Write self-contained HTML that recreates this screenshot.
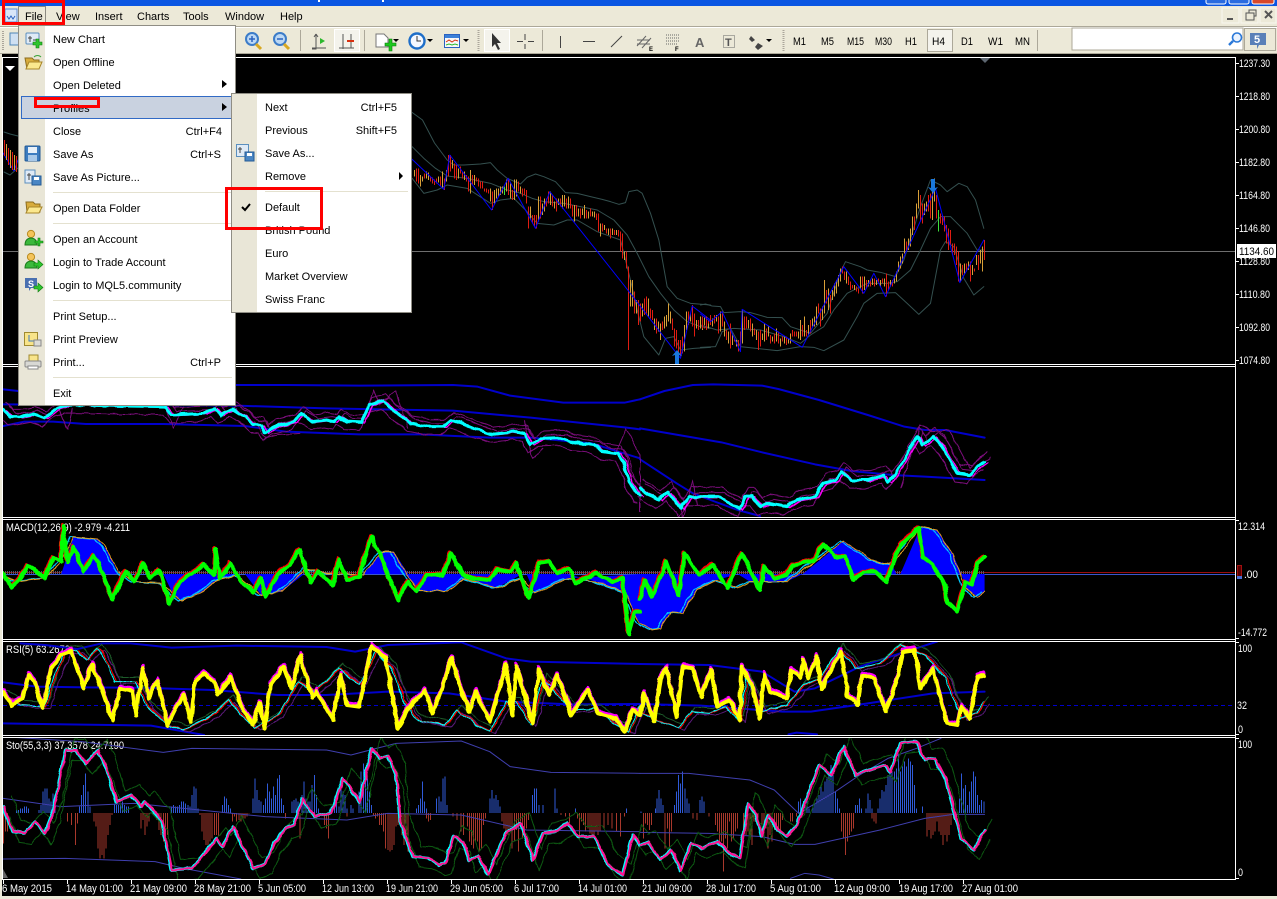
<!DOCTYPE html>
<html><head><meta charset="utf-8"><title>MT4 File Profiles Menu</title>
<style>
html,body{margin:0;padding:0;background:#000;overflow:hidden}
svg{display:block}
svg text{font-family:"Liberation Sans",sans-serif;font-size:11px;fill:#000}
.w text,text.w{fill:#fff}
.ln path,path.ln,defs path{vector-effect:non-scaling-stroke;fill:none;stroke-linejoin:round;stroke-linecap:round}
.bar{vector-effect:non-scaling-stroke;fill:none;shape-rendering:crispEdges;stroke-width:1}
</style></head><body>
<svg xmlns="http://www.w3.org/2000/svg" width="1277" height="899" viewBox="0 0 1277 899">
<defs>
<filter id="rough" filterUnits="userSpaceOnUse" x="0" y="0" width="1277" height="899" color-interpolation-filters="sRGB">
<feTurbulence type="fractalNoise" baseFrequency="0.12" numOctaves="1" seed="7" result="n"/>
<feDisplacementMap in="SourceGraphic" in2="n" scale="4" xChannelSelector="R" yChannelSelector="G"/>
</filter>
<clipPath id="c1"><rect x="3" y="58" width="1232" height="306"/></clipPath>
<clipPath id="c2"><rect x="3" y="367" width="1232" height="150"/></clipPath>
<clipPath id="c3"><rect x="3" y="520" width="1232" height="119"/></clipPath>
<clipPath id="c4"><rect x="3" y="642" width="1232" height="93"/></clipPath>
<clipPath id="c5"><rect x="3" y="738" width="1232" height="141"/></clipPath>

<path id="cy6" d="M8 135 25 155 50 155 80 148 110 160 140 130 170 120 405 125 420 150 500 145 525 130 540 150 570 132 600 155 620 178 640 180 650 205 670 185 720 170 735 148 755 160 765 170 800 165 820 170 830 155 850 170 885 172 905 120 940 108 965 140 985 155 1005 175 1050 185 1085 185 1105 165 1130 175 1160 190 1205 208 1265 200 1285 205 1300 240 1325 220 1375 218 1405 232 1455 240 1475 258 1515 265 1530 300 1540 350 1560 385 1568 390"/>
<path id="cy7" d="M0 370 30 395 45 405 70 380 100 430 120 395 145 395 195 395 220 415 245 430 260 395 275 395 295 425 315 415 360 425 385 405 430 395 450 355 480 345 495 320 520 345 560 345 600 330 610 350 625 330 650 280 680 215 695 240 720 215 740 240 780 325 810 330 830 305 847 290"/>

<path id="gr6" d="M8 625 28 665 50 640 70 600 90 620 110 640 130 578 150 590 155 485 165 590 180 545 205 620 230 570 250 620 275 705 295 650 310 620 330 650 350 595 368 640 390 615 415 715 440 650 470 625 500 600 525 630 528 550 540 640 565 595 590 650 620 680 640 640 650 695 680 630 710 600 735 555 760 650 780 620 815 660 830 585 850 645 880 635 910 515 935 580 975 705 1000 650 1020 680 1045 630 1085 630 1105 565 1135 630 1160 640 1200 645 1220 612 1250 620 1265 595 1295 700 1320 595 1345 590 1365 625 1395 610 1410 655 1460 625 1500 650 1525 640 1540 805 1555 740 1568 740"/>
<path id="gr7" d="M0 700 12 645 30 695 65 590 95 690 110 565 145 630 180 600 215 670 250 565 295 675 305 605 330 640 360 630 375 600 430 585 440 555 450 540 480 575 505 575 525 645 550 620 580 620 605 650 640 540 685 490 695 575 720 600 750 660 755 710 780 740 800 650 815 660 830 595 847 575"/>
<path id="or6" d="M8 630 45 650 110 640 150 590 180 515 240 522 265 560 290 620 330 650 400 655 425 690 445 708 490 685 530 648 580 630 640 690 690 680 750 610 800 625 890 630 935 560 965 560 990 620 1030 678 1095 678 1140 640 1215 670 1280 640 1310 685 1390 640 1460 650 1530 680 1560 760 1568 775"/>
<path id="or7" d="M0 775 30 795 50 790 75 742 105 745 140 675 190 645 240 670 270 650 360 650 430 590 500 528 570 585 620 600 690 485 730 495 770 570 800 670 830 695 847 680"/>

<path id="ye8" d="M8 170 28 210 55 190 70 120 85 140 105 220 125 100 150 60 175 50 205 160 225 90 250 165 275 255 295 160 325 170 333 240 350 100 365 190 385 135 410 270 430 220 450 180 468 260 478 140 500 115 525 140 535 180 565 125 590 210 620 270 635 205 648 280 662 150 695 95 715 160 735 60 765 190 775 170 815 255 835 120 850 210 880 215 910 35 945 70 975 280 1000 220 1040 165 1060 235 1080 170 1105 70 1125 145 1150 230 1165 170 1200 260 1240 90 1255 240 1265 95 1305 265 1320 105 1345 180 1365 120 1400 240 1440 165 1465 235 1510 250 1530 290 1550 225 1568 240"/>
<path id="ye9" d="M0 240 10 175 35 260 50 130 65 100 90 245 105 95 130 100 150 185 175 105 190 215 220 195 245 255 250 95 275 150 295 250 305 120 320 170 360 190 372 105 395 130 400 75 415 130 435 65 445 165 480 80 495 50 510 180 535 210 545 120 575 130 605 230 635 120 645 50 675 45 690 160 720 100 740 195 755 265 780 270 790 215 810 250 830 125 845 120"/>
<path id="rs8" d="M8 180 50 210 110 215 130 130 160 50 190 45 210 75 240 40 265 90 280 140 300 140 330 140 360 215 410 270 450 285 520 240 560 195 590 240 625 280 680 240 730 140 770 170 830 100 880 150 920 50 960 100 985 190 1020 255 1090 270 1120 225 1165 270 1200 290 1240 200 1265 200 1300 270 1330 130 1400 225 1460 220 1510 270 1540 290 1568 210"/>
<path id="rs9" d="M0 230 40 255 95 280 125 230 170 235 210 215 245 258 260 130 300 230 360 210 400 150 440 130 490 40 530 100 590 85 640 30 700 60 750 130 790 250 830 230 845 200"/>

<path id="st8" d="M8 515 30 590 60 595 85 560 110 595 130 530 160 345 185 345 210 385 240 345 260 400 285 500 320 480 345 515 355 500 395 555 420 705 470 700 510 640 530 610 545 635 570 575 620 700 650 685 670 625 700 580 720 570 740 490 770 545 810 535 840 430 880 500 910 340 930 370 950 360 970 420 980 560 1010 665 1050 670 1075 690 1090 685 1110 605 1135 620 1150 680 1170 660 1195 720 1240 590 1275 565 1305 675 1330 595 1360 590 1390 565 1415 605 1455 605 1490 690 1525 720 1550 600 1568 630"/>
<path id="st9" d="M0 630 20 620 50 675 75 645 100 705 125 625 150 640 190 620 225 660 245 670 265 505 285 540 298 605 315 540 340 585 360 605 385 570 440 390 470 420 500 335 530 420 550 410 600 390 615 410 640 325 680 320 700 375 725 370 750 430 790 610 820 645 847 585"/>
</defs>

<!-- base -->
<rect width="1277" height="899" fill="#000"/>
<rect x="0" y="0" width="1277" height="6" fill="#0a56e2"/>
<rect x="0" y="6" width="1277" height="48" fill="#ece9d8"/>
<rect x="0" y="26" width="1277" height="1" fill="#aca899"/>
<rect x="0" y="27" width="1277" height="1" fill="#fff"/>
<rect x="0" y="53" width="1277" height="1" fill="#aca899"/>
<rect x="0" y="54" width="2" height="845" fill="#ece9d8"/>
<rect x="0" y="896" width="1277" height="3" fill="#ece9d8"/>

<!-- title bar remnants -->
<path d="M318 0h2v2h-2zM382 0h2v2h-2z" fill="#fff"/>
<rect x="1206" y="-4" width="20" height="8" rx="2" fill="#2a6be0" stroke="#fff"/>
<rect x="1229" y="-4" width="20" height="8" rx="2" fill="#2a6be0" stroke="#fff"/>
<rect x="1252" y="-4" width="22" height="8" rx="2" fill="#d8482a" stroke="#fff"/>

<!-- frames -->
<g fill="none" stroke="#fff" stroke-width="1" shape-rendering="crispEdges">
<path d="M2.5 57.5H1235.5V879.5H2.5Z"/>
<path d="M2 364.5H1236M2 366.5H1236M2 517.5H1236M2 519.5H1236M2 639.5H1236M2 641.5H1236M2 735.5H1236M2 737.5H1236"/>
<path d="M1236 63.5h3M1236 96.5h3M1236 129.5h3M1236 162.5h3M1236 195.5h3M1236 228.5h3M1236 261.5h3M1236 294.5h3M1236 327.5h3M1236 360.5h3M1236 520.5h3M1236 638.5h3M1236 642.5h3M1236 734.5h3M1236 738.5h3M1236 878.5h3"/>
<path d="M3.5 880v4M67.5 880v4M131.5 880v4M195.5 880v4M259.5 880v4M323.5 880v4M387.5 880v4M451.5 880v4M515.5 880v4M579.5 880v4M643.5 880v4M707.5 880v4M771.5 880v4M835.5 880v4M899.5 880v4M963.5 880v4"/>
</g>

<!-- MAIN CHART -->
<g clip-path="url(#c1)">
<rect x="3" y="251" width="1232" height="1" fill="#6e6e6e"/>
<path d="M5 66h10l-5 5z" fill="#fff"/>
<path d="M980 58h10l-5 5z" fill="#5d6670"/>
<!-- left sliver -->
<g class="ln" stroke-width="1">
<path stroke="#2f4f4f" d="M4 132 10 134 18 136"/>
<path stroke="#2f4f4f" d="M4 172 10 175 18 168"/>
<path stroke="#00f" d="M3 153 14 171 18 160"/>
</g>
<path class="bar" stroke="#e01c12" d="M4.5 140V156M8.5 148V165M12.5 152V170M16.5 156V172"/>
<path class="bar" stroke="#d8a038" d="M6.5 144V160M10.5 150V168M14.5 155V170"/>

<g transform="translate(410.5,140) scale(.33333)">
<g class="ln" stroke="#34504f" stroke-width="1">
<path d="M3 -84 36 -60 72 9 110 60 130 75 160 75 210 72 240 68 260 90 290 115 330 132 350 112 375 102 400 110 435 125 465 158 500 160 540 170 575 178 600 185 625 193 645 188 655 155 680 150 695 160 720 220 745 300 770 440 800 475 840 490 900 495"/>
<path d="M5 20 40 55 75 85 110 108 170 115 240 130 290 150 325 158 365 175 400 185 460 190 500 198 560 210 610 240 650 285 680 340 715 410 750 460 790 510 830 545 870 560 900 565"/>
<path d="M5 115 40 160 80 150 110 135 170 145 240 190 270 180 310 175 345 210 380 250 430 255 470 240 500 240 560 275 630 300 660 420 680 510 700 590 745 645 765 595 790 590 810 630 850 625 900 622"/>
</g>
<path class="bar" stroke="#d8a038" d="M12 90V110M30 105V140M36 110V125M48 95V115M54 98V120M84 110V128M96 95V145M108 90V125M126 60V85M144 85V115M162 95V120M180 90V160M192 105V135M240 145V185M252 150V190M258 145V175M264 145V170M270 140V165M276 140V160M288 118V155M300 130V175M312 118V180M318 118V170M330 140V160M360 200V240M384 170V245M396 190V225M402 175V215M420 155V195M432 185V205M444 175V195M456 165V205M462 165V200M474 170V205M492 195V245M504 205V230M516 205V225M522 195V235M534 215V235M546 215V230M552 215V232M570 250V290M582 255V270M594 265V285M606 265V285M618 270V285M642 335V360"/>
<path class="bar" stroke="#d8a038" transform="translate(2 0)" d="M658 420V500M664 420V500M676 480V520M694 490V530M712 475V530M730 535V570M742 545V575M748 550V600M760 530V565M766 525V560M772 490V545M778 515V550M820 555V635M826 515V570M838 520V545M856 540V565M868 540V560M874 540V570M886 530V570"/>
<path class="bar" stroke="#e01c12" d="M18 85V125M24 85V130M42 100V115M60 110V125M66 112V130M72 118V135M78 115V130M90 110V140M102 115V150M114 45V110M120 45V95M132 70V115M138 75V120M150 80V100M156 95V115M168 105V125M174 110V155M186 105V135M198 112V125M204 115V140M210 125V145M216 125V145M222 145V155M228 145V158M234 148V160M246 155V210M294 115V165M306 150V180M324 125V155M336 145V170M342 145V165M348 150V190M354 200V265M366 225V250M372 225V260M378 225V265M390 170V235M408 175V200M414 155V190M426 165V200M438 175V215M450 175V200M468 175V205M480 175V205M486 195V230M498 195V230M510 205V235M528 210V235M540 205V230M558 220V240M564 220V275M576 250V275M588 265V280M600 265V295M612 270V285M624 270V290M630 275V335M636 280V355M648 335V385"/>
<path class="bar" stroke="#e01c12" transform="translate(2 0)" d="M652 380V630M670 455V520M682 480V555M688 490V545M700 475V525M706 470V520M718 505V535M724 510V540M736 535V580M754 545V570M784 535V570M790 565V620M796 570V625M802 600V640M808 600V650M814 590V640M832 515V555M844 495V560M850 520V590M862 540V570M880 530V565M892 540V555M898 545V555"/>
<path class="bar" stroke="#3ce03c" d="M282 140V165"/>
<path class="ln" stroke="#00f" stroke-width="1" d="M5 58 100 148 118 45 243 210 293 115 375 265 418 155 640 435 810 655 845 498 900 540"/>
</g>

<g transform="translate(700.5,140) scale(.33333)">
<g class="ln" stroke="#34504f" stroke-width="1">
<path d="M0 495 15 492 35 498 60 500 70 518 120 515 150 518 200 532 245 533 270 560 300 570 330 580 380 520 420 395 435 365 480 380 500 390 540 397 585 410 610 360 660 200 690 120 720 135 740 155 775 130 800 140 825 180 850 265"/>
<path d="M0 555 50 570 100 565 180 570 250 590 300 610 330 585 370 560 400 510 440 460 500 430 560 430 590 425 630 390 660 330 690 265 720 230 750 230 770 250 800 280 830 330 850 330"/>
<path d="M0 622 45 620 65 575 90 565 120 620 230 632 300 620 340 622 370 632 430 600 470 530 490 490 530 460 585 458 620 490 655 523 690 490 720 330 735 305 760 320 790 415 820 465 850 440"/>
</g>
<path class="bar" stroke="#d8a038" d="M0 530V565M12 530V555M24 550V565M36 535V560M48 525V545M60 515V575M72 545V590M84 575V610M96 580V615M108 600V620M126 510V610M144 540V565M156 550V590M168 570V600M186 580V600M192 550V605M204 560V590M216 590V605M228 565V605M240 595V620M252 590V610M264 595V610M270 580V610M294 575V595M300 540V600M312 530V590M324 555V585M336 535V560M342 530V560M348 500V555M366 500V540M372 420V520M384 445V510M396 450V480M402 430V470M408 420V460M414 405V440M420 385V425M438 395V430M462 435V450M480 410V445M492 410V450M504 420V440M516 415V435M528 420V435M540 420V440M552 415V440M570 420V440M582 410V430M588 395V425M594 365V395M600 350V385M606 340V370M612 295V340M624 295V330M630 265V320M636 230V285M648 190V235M654 150V205M672 190V225M678 185V215M696 150V240M702 115V185M780 370V425M792 370V400M804 365V390M816 375V405M828 345V375M840 330V370M846 320V395"/>
<path class="bar" stroke="#e01c12" d="M6 530V565M18 530V570M30 525V555M42 525V550M54 530V580M66 515V560M78 570V600M90 550V625M102 595V605M114 600V635M120 575V635M132 530V570M138 530V565M150 535V575M162 565V585M174 575V630M180 570V620M198 565V600M210 585V610M222 580V610M234 575V610M246 590V605M258 590V615M276 570V590M282 575V590M288 575V590M306 555V590M318 570V590M330 540V580M354 490V520M360 505V560M378 450V490M390 465V520M426 380V400M432 395V420M444 410V435M450 425V450M456 435V445M468 440V455M474 445V460M486 410V460M498 420V445M510 420V440M522 415V440M534 415V430M546 415V430M558 400V470M564 425V450M576 420V440M618 305V335M642 230V270M660 165V245M666 190V250M684 165V215M690 160V235M708 165V235M720 220V250M726 225V255M732 230V275M738 255V310M744 265V330M750 270V315M756 310V345M762 310V345M768 320V375M774 335V425M786 375V405M798 370V395M810 365V425M822 385V395M834 345V390M852 300V360"/>
<path class="bar" stroke="#3ce03c" d="M714 210V275"/>
<path class="ln" stroke="#00f" stroke-width="1" d="M0 522 30 545 65 515 120 635 125 508 305 622 430 380 490 460 520 400 555 470 705 145 778 428 850 300"/>
</g>
<path fill="#1a78dc" d="M677 350l5 6-3-1v9h-4v-9l-3 1zM933 193l-5-6 3 1 0-9h4v9l3-1z"/>
</g>

<!-- PANEL 1: MA bands -->
<g clip-path="url(#c2)">
<g transform="translate(0,365) scale(.40816,.33333)" class="ln">
<g stroke="#00c" stroke-width="2">
<path d="M8 73 45 78 575 60 700 60 880 62 1110 60 1170 65 1250 92 1380 113 1530 113 1568 103"/>
<path d="M8 118 580 122 800 130 1110 137 1300 158 1530 187 1568 193"/>
<path d="M8 183 60 170 130 170 210 177 400 177 600 183 700 200 880 208 1030 208 1200 218 1300 218 1450 235 1520 262 1568 280"/>
</g>
</g>
<g transform="translate(640,365) scale(.40683,.33333)" class="ln">
<g stroke="#00c" stroke-width="2">
<path d="M0 103 60 78 130 60 180 58 300 62 340 72 440 105 560 150 650 185 700 195 750 195 847 218"/>
<path d="M0 190 200 232 300 262 430 298 520 318 620 330 700 335 847 345"/>
<path d="M0 283 90 355 130 385 180 408 240 435 295 453"/>
</g>
</g>
<g filter="url(#rough)">
<g transform="translate(0,365) scale(.40816,.33333)" class="ln">
<g stroke="#7c0e7c" stroke-width="1">
<use href="#cy6" transform="translate(6,-22)"/>
<use href="#cy6" transform="translate(-6,24)"/>
<use href="#cy6" transform="translate(14,-10)"/>
<path d="M140 120 165 195 178 130M405 125 425 190 450 125M625 170 650 220 680 210 735 205M890 170 915 75 930 120 970 78 1000 190M1285 170 1305 280 1330 250M1510 260 1535 190 1568 270 1568 440"/>
</g>
<use href="#cy6" transform="translate(8,2)" stroke="#f0f" stroke-width="1.3"/>
<use href="#cy6" stroke="#0ff" stroke-width="3"/>
</g>
<g transform="translate(640,365) scale(.40683,.33333)" class="ln">
<g stroke="#7c0e7c" stroke-width="1">
<use href="#cy7" transform="translate(6,-28)"/>
<use href="#cy7" transform="translate(-6,26)"/>
<use href="#cy7" transform="translate(14,-12)"/>
<path d="M90 400 105 460 130 345 140 420M640 370 690 180 720 200 760 195 810 310 845 270"/>
</g>
<use href="#cy7" transform="translate(8,3)" stroke="#f0f" stroke-width="1.3"/>
<use href="#cy7" stroke="#0ff" stroke-width="3"/>
</g>
</g>
</g>

<!-- PANEL 2: MACD -->
<text class="w" x="6" y="531" textLength="124" lengthAdjust="spacingAndGlyphs">MACD(12,26,9) -2.979 -4.211</text>
<g clip-path="url(#c3)">
<rect x="3" y="572" width="1232" height="1" fill="#9a0c0c"/>
<rect x="3" y="574" width="1232" height="1" fill="#3a55cc"/>
<path d="M3 572.5H984" stroke="#556" stroke-width="3" stroke-dasharray="1 1" fill="none"/>
<g transform="translate(0,365) scale(.40816,.33333)">
<path fill="#00f" d="M150 627 180 515 240 522 265 560 290 627ZM400 627 425 690 445 708 490 685 530 648 580 627ZM600 627 640 690 690 680 745 627ZM960 627 990 625 1030 678 1095 678 1140 640 1215 670 1280 627ZM1290 627 1310 685 1390 640 1568 627 1568 775 1560 760 1530 680 1460 650 1390 627Z"/>
<path fill="#00f" d="M890 627 935 560 965 560 1000 627Z"/>
</g>
<g transform="translate(640,365) scale(.40683,.33333)">
<path fill="#00f" d="M0 627V775L30 795 50 790 75 742 105 745 140 675 190 645 240 627ZM240 627 270 650 360 650 400 627ZM400 627 500 528 570 585 620 600 630 627ZM640 627 690 485 730 495 770 570 790 627ZM790 627 800 670 830 695 847 680V627Z"/>
</g>
<g filter="url(#rough)">
<g transform="translate(0,365) scale(.40816,.33333)" class="ln">
<use href="#or6" stroke="#00c8ff" stroke-width="1.3" transform="translate(-8,0)"/>
<use href="#or6" stroke="#e8a020" stroke-width="1"/>
<use href="#gr6" stroke="#f00" stroke-width="3" transform="translate(-3,-4)"/>
<use href="#gr6" stroke="#0f0" stroke-width="4"/>
</g>
<g transform="translate(640,365) scale(.40683,.33333)" class="ln">
<use href="#or7" stroke="#00c8ff" stroke-width="1.3" transform="translate(-8,0)"/>
<use href="#or7" stroke="#e8a020" stroke-width="1"/>
<use href="#gr7" stroke="#f00" stroke-width="3" transform="translate(-3,-4)"/>
<use href="#gr7" stroke="#0f0" stroke-width="4"/>
</g>
</g>
</g>

<!-- PANEL 3: RSI -->
<text class="w" x="6" y="653" textLength="64" lengthAdjust="spacingAndGlyphs">RSI(5) 63.2678</text>
<g clip-path="url(#c4)">
<path d="M3 705.5H1235" stroke="#00c" stroke-width="1" stroke-dasharray="4 3" fill="none"/>
<g transform="translate(0,635) scale(.40816,.33333)" class="ln">
<g stroke="#00c" stroke-width="2">
<path d="M50 25 110 30 190 42 250 25 320 25 420 38 580 32 800 36 870 50 950 30 1130 22 1240 70 1300 80 1568 87"/>
<path d="M8 142 90 155 210 157 340 158 520 165 680 180 800 180 950 170 1100 175 1240 200 1400 208 1568 207"/>
<path d="M8 265 160 268 370 272 430 285 500 300"/>
</g>
</g>
<g transform="translate(640,635) scale(.40683,.33333)" class="ln">
<g stroke="#00c" stroke-width="2">
<path d="M0 87 170 90 300 110 380 170 430 160 540 95 640 55 730 20"/>
<path d="M0 207 150 212 350 230 420 230 560 205 720 175 847 170"/>
<path d="M365 298 385 293 435 298"/>
</g>
</g>
<g filter="url(#rough)">
<g transform="translate(0,635) scale(.40816,.33333)" class="ln">
<use href="#rs8" stroke="#1d5c2a" stroke-width="1" transform="translate(10,-14)"/>
<use href="#rs8" stroke="#5b1a7a" stroke-width="1" transform="translate(14,6)"/>
<use href="#rs8" stroke="#f00" stroke-width="1" transform="translate(4,0)"/>
<use href="#rs8" stroke="#0ff" stroke-width="1"/>
<use href="#ye8" stroke="#f0f" stroke-width="3.5" transform="translate(0,-7)"/>
<use href="#ye8" stroke="#ff0" stroke-width="4"/>
</g>
<g transform="translate(640,635) scale(.40683,.33333)" class="ln">
<use href="#rs9" stroke="#1d5c2a" stroke-width="1" transform="translate(10,-14)"/>
<use href="#rs9" stroke="#5b1a7a" stroke-width="1" transform="translate(14,6)"/>
<use href="#rs9" stroke="#f00" stroke-width="1" transform="translate(4,0)"/>
<use href="#rs9" stroke="#0ff" stroke-width="1"/>
<use href="#ye9" stroke="#f0f" stroke-width="3.5" transform="translate(0,-7)"/>
<use href="#ye9" stroke="#ff0" stroke-width="4"/>
</g>
</g>
</g>

<!-- PANEL 4: STOCH -->
<text class="w" x="6" y="749" textLength="118" lengthAdjust="spacingAndGlyphs">Sto(55,3,3) 37.3578 24.7190</text>
<g clip-path="url(#c5)">
<path d="M3 875v-6l5 9H3z" fill="#666"/>
<g transform="translate(0,635) scale(.40816,.33333)">
<path class="bar" stroke="#2f5ad8" d="M40 534V525M45 534V525M50 534V520M55 534V520M60 534V515M65 534V515M70 534V520M95 534V525M100 534V510M105 534V470M110 534V460M115 534V460M120 534V490M125 534V500M130 534V475M135 534V480M195 534V515M200 534V480M205 534V450M210 534V415M215 534V470M220 534V515M280 534V505M285 534V510M290 534V510M295 534V510M300 534V500M305 534V510M310 534V515M315 534V515M420 534V515M425 534V510M430 534V515M435 534V515M440 534V510M445 534V500M450 534V500M455 534V505M460 534V510M465 534V515M470 534V480M475 534V455M480 534V460M485 534V520M545 534V510M550 534V485M555 534V490M560 534V510M565 534V520M620 534V490M625 534V430M630 534V465M635 534V495M640 534V500M645 534V510M650 534V490M655 534V445M660 534V470M665 534V490M670 534V455M675 534V480M680 534V430M685 534V420M690 534V490M695 534V510M715 534V500M720 534V495M725 534V490M730 534V500M740 534V480M745 534V440M750 534V490M755 534V500M760 534V500M765 534V450M770 534V420M775 534V480M780 534V520M820 534V490M825 534V475M830 534V515M835 534V440M840 534V470M845 534V480M850 534V520M860 534V510M865 534V520M880 534V470M885 534V410M890 534V385M895 534V410M900 534V430M905 534V470M910 534V510M1020 534V520M1025 534V510M1030 534V490M1035 534V440M1040 534V500M1045 534V520M1070 534V490M1075 534V485M1080 534V500M1085 534V430M1090 534V425M1095 534V510M1200 534V490M1205 534V465M1210 534V490M1215 534V480M1220 534V495M1225 534V515M1305 534V480M1310 534V460M1315 534V460M1320 534V510M1330 534V510M1360 534V460M1365 534V520M1410 534V520M1535 534V520"/>
<path class="bar" stroke="#a8382c" d="M8 534V625M13 534V590M18 534V590M165 534V560M175 534V570M185 534V630M190 534V565M230 534V560M235 534V575M240 534V640M245 534V670M250 534V660M255 534V670M260 534V640M265 534V600M270 534V570M275 534V540M345 534V580M350 534V555M355 534V600M360 534V575M365 534V560M375 534V540M385 534V555M390 534V585M395 534V600M400 534V620M405 534V640M410 534V600M490 534V540M495 534V590M500 534V615M505 534V630M510 534V630M515 534V620M520 534V610M525 534V600M530 534V600M535 534V605M570 534V560M575 534V545M580 534V560M585 534V555M590 534V560M595 534V550M600 534V550M605 534V545M610 534V535M700 534V550M735 534V610M795 534V570M800 534V580M805 534V610M850 534V545M915 534V540M920 534V550M925 534V545M930 534V570M935 534V570M940 534V590M945 534V640M950 534V645M955 534V650M960 534V645M965 534V630M970 534V575M975 534V570M985 534V600M990 534V630M995 534V610M1000 534V650M1045 534V550M1050 534V560M1055 534V555M1110 534V545M1120 534V555M1130 534V590M1135 534V600M1145 534V575M1150 534V620M1155 534V630M1160 534V640M1165 534V620M1170 534V620M1175 534V650M1180 534V640M1185 534V570M1190 534V550M1230 534V560M1235 534V580M1240 534V590M1245 534V600M1250 534V590M1255 534V640M1260 534V620M1265 534V585M1270 534V650M1275 534V560M1280 534V610M1285 534V600M1290 534V580M1295 534V555M1375 534V540M1385 534V545M1395 534V565M1415 534V550M1420 534V610M1425 534V560M1430 534V570M1435 534V590M1440 534V580M1445 534V595M1450 534V610M1455 534V600M1460 534V590M1465 534V600M1470 534V590M1480 534V580M1490 534V570M1500 534V580M1510 534V590M1520 534V605M1530 534V545"/>
<g class="ln">
<g stroke="#3f3fae" stroke-width="1">
<path d="M8 305 200 320 400 352 470 340 800 345 860 360 970 325 1130 318 1200 350 1250 395 1350 412 1568 415"/>
<path d="M8 490 150 515 330 505 450 520 650 545 850 555 950 535 1130 540 1290 585 1568 590"/>
<path d="M8 672 160 670 380 680 450 700 590 732"/>
</g>
</g>
</g>
<g transform="translate(640,635) scale(.40683,.33333)">
<path class="bar" stroke="#2f5ad8" d="M2 534V530M38 534V520M42 534V490M47 534V465M52 534V490M57 534V510M85 534V510M90 534V470M95 534V420M100 534V445M105 534V410M110 534V460M115 534V490M120 534V505M147 534V495M152 534V485M157 534V500M390 534V500M395 534V490M400 534V510M405 534V500M410 534V490M415 534V520M425 534V510M430 534V505M435 534V490M440 534V480M445 534V450M450 534V470M455 534V440M460 534V430M465 534V410M470 534V390M475 534V420M480 534V470M485 534V490M490 534V520M530 534V510M535 534V510M540 534V490M545 534V520M555 534V520M560 534V475M565 534V495M570 534V520M585 534V520M590 534V490M595 534V465M600 534V470M605 534V450M610 534V420M615 534V400M620 534V410M625 534V410M630 534V400M635 534V360M640 534V410M645 534V395M650 534V380M655 534V395M660 534V370M665 534V380M670 534V390M675 534V450M680 534V520M695 534V515M785 534V490M790 534V415M795 534V460M800 534V450M805 534V510M810 534V470M815 534V440M820 534V410M825 534V425M830 534V480M835 534V510M840 534V495M845 534V500"/>
<path class="bar" stroke="#a8382c" d="M8 534V610M13 534V565M18 534V570M23 534V585M28 534V570M62 534V640M67 534V580M72 534V640M77 534V590M130 534V550M140 534V555M170 534V545M185 534V570M190 534V590M195 534V620M200 534V620M205 534V710M210 534V610M215 534V640M220 534V560M225 534V620M230 534V610M235 534V590M240 534V580M255 534V610M260 534V600M265 534V590M270 534V600M275 534V630M280 534V560M290 534V550M300 534V590M305 534V610M310 534V580M315 534V640M320 534V600M325 534V620M330 534V585M335 534V590M340 534V580M345 534V590M350 534V555M370 534V560M375 534V560M385 534V545M495 534V590M500 534V610M505 534V660M510 534V620M515 534V600M520 534V590M525 534V580M570 534V550M575 534V560M580 534V565M705 534V605M710 534V585M715 534V610M720 534V600M725 534V590M730 534V560M735 534V590M740 534V600M745 534V630M750 534V600M755 534V620M760 534V600M765 534V570M770 534V550M775 534V545"/>
<g class="ln">
<g stroke="#3f3fae" stroke-width="1">
<path d="M0 415 120 415 270 435 330 465 390 535 480 470 540 420 610 370 680 340 740 310"/>
<path d="M0 592 170 595 300 605 380 628 430 628 590 585 700 550 770 538 847 538"/>
<path d="M370 730 405 715 440 720 475 732"/>
</g>
</g>
</g>
<g filter="url(#rough)">
<g transform="translate(0,635) scale(.40816,.33333)" class="ln">
<use href="#st8" stroke="#0d5a12" stroke-width="1" transform="translate(22,-32)"/>
<use href="#st8" stroke="#0d5a12" stroke-width="1" transform="translate(16,32)"/>
<use href="#st8" stroke="#0ff" stroke-width="3"/>
<use href="#st8" stroke="#ff1493" stroke-width="2" transform="translate(2,0)"/>
</g>
<g transform="translate(640,635) scale(.40683,.33333)" class="ln">
<use href="#st9" stroke="#0d5a12" stroke-width="1" transform="translate(18,-32)"/>
<use href="#st9" stroke="#0d5a12" stroke-width="1" transform="translate(14,30)"/>
<use href="#st9" stroke="#0ff" stroke-width="3"/>
<use href="#st9" stroke="#ff1493" stroke-width="2" transform="translate(2,0)"/>
</g>
</g>
</g>

<!-- RIGHT AXIS LABELS -->
<g class="w">
<text x="1239" y="67" textLength="31" lengthAdjust="spacingAndGlyphs">1237.30</text>
<text x="1239" y="100" textLength="31" lengthAdjust="spacingAndGlyphs">1218.80</text>
<text x="1239" y="133" textLength="31" lengthAdjust="spacingAndGlyphs">1200.80</text>
<text x="1239" y="166" textLength="31" lengthAdjust="spacingAndGlyphs">1182.80</text>
<text x="1239" y="199" textLength="31" lengthAdjust="spacingAndGlyphs">1164.80</text>
<text x="1239" y="232" textLength="31" lengthAdjust="spacingAndGlyphs">1146.80</text>
<text x="1239" y="265" textLength="31" lengthAdjust="spacingAndGlyphs">1128.80</text>
<text x="1239" y="298" textLength="31" lengthAdjust="spacingAndGlyphs">1110.80</text>
<text x="1239" y="331" textLength="31" lengthAdjust="spacingAndGlyphs">1092.80</text>
<text x="1239" y="364" textLength="31" lengthAdjust="spacingAndGlyphs">1074.80</text>
<text x="1238" y="530" textLength="27" lengthAdjust="spacingAndGlyphs">12.314</text>
<text x="1244" y="578" textLength="14" lengthAdjust="spacingAndGlyphs">.00</text>
<text x="1238" y="636" textLength="29" lengthAdjust="spacingAndGlyphs">-14.772</text>
<text x="1238" y="652" textLength="14" lengthAdjust="spacingAndGlyphs">100</text>
<text x="1237" y="709" textLength="10" lengthAdjust="spacingAndGlyphs">32</text>
<text x="1238" y="733" textLength="5" lengthAdjust="spacingAndGlyphs">0</text>
<text x="1238" y="748" textLength="14" lengthAdjust="spacingAndGlyphs">100</text>
<text x="1238" y="876" textLength="5" lengthAdjust="spacingAndGlyphs">0</text>
</g>
<rect x="1237" y="244" width="39" height="14" fill="#fff"/>
<text x="1239" y="255" textLength="35" lengthAdjust="spacingAndGlyphs">1134.60</text>
<rect x="1237.5" y="565.5" width="4" height="11" fill="#5a0000" stroke="#a01010"/>
<rect x="1237" y="576" width="5" height="3" fill="#4a70d8"/>

<!-- TIME AXIS -->
<g class="w">
<text x="2" y="892" textLength="50" lengthAdjust="spacingAndGlyphs">6 May 2015</text>
<text x="66" y="892" textLength="57" lengthAdjust="spacingAndGlyphs">14 May 01:00</text>
<text x="130" y="892" textLength="57" lengthAdjust="spacingAndGlyphs">21 May 09:00</text>
<text x="194" y="892" textLength="57" lengthAdjust="spacingAndGlyphs">28 May 21:00</text>
<text x="258" y="892" textLength="48" lengthAdjust="spacingAndGlyphs">5 Jun 05:00</text>
<text x="322" y="892" textLength="52" lengthAdjust="spacingAndGlyphs">12 Jun 13:00</text>
<text x="386" y="892" textLength="52" lengthAdjust="spacingAndGlyphs">19 Jun 21:00</text>
<text x="450" y="892" textLength="53" lengthAdjust="spacingAndGlyphs">29 Jun 05:00</text>
<text x="514" y="892" textLength="45" lengthAdjust="spacingAndGlyphs">6 Jul 17:00</text>
<text x="578" y="892" textLength="49" lengthAdjust="spacingAndGlyphs">14 Jul 01:00</text>
<text x="642" y="892" textLength="50" lengthAdjust="spacingAndGlyphs">21 Jul 09:00</text>
<text x="706" y="892" textLength="50" lengthAdjust="spacingAndGlyphs">28 Jul 17:00</text>
<text x="770" y="892" textLength="51" lengthAdjust="spacingAndGlyphs">5 Aug 01:00</text>
<text x="834" y="892" textLength="56" lengthAdjust="spacingAndGlyphs">12 Aug 09:00</text>
<text x="899" y="892" textLength="54" lengthAdjust="spacingAndGlyphs">19 Aug 17:00</text>
<text x="962" y="892" textLength="56" lengthAdjust="spacingAndGlyphs">27 Aug 01:00</text>
</g>

<!-- MENU BAR -->
<g>
<rect x="5" y="9" width="12" height="13" fill="#d8e6f8" stroke="#5a8ad8"/>
<path d="M7 16l2 3 2-3 2 3 2-3" stroke="#2a62c0" fill="none"/>
<rect x="18.5" y="6.5" width="27" height="19" fill="#ece9d8" stroke="#8c8a80"/>
<text x="25" y="20">File</text><text x="56" y="20">View</text><text x="95" y="20">Insert</text><text x="137" y="20">Charts</text><text x="183" y="20">Tools</text><text x="225" y="20">Window</text><text x="280" y="20">Help</text>
<g stroke="#f7f6ef" fill="none"><rect x="1222" y="8" width="17" height="15"/><rect x="1241" y="8" width="17" height="15"/><rect x="1260" y="8" width="16" height="15"/></g>
<path d="M1227 18h6v2h-6z" fill="#555"/>
<path d="M1246 13h8v7h-8zM1249 13v-3h7v6h-2" stroke="#555" fill="none"/>
<path d="M1265 11l7 7M1272 11l-7 7" stroke="#555" stroke-width="2"/>
</g>

<!-- TOOLBAR -->
<g>
<path d="M3 31v20" stroke="#aaa59a" stroke-width="2" stroke-dasharray="1 1"/>
<rect x="10" y="33" width="9" height="12" fill="#cfe0f2" stroke="#4f86b8"/>
<!-- zoom in/out -->
<circle cx="252" cy="39" r="6" fill="#bcd8f4" stroke="#3c7cc8" stroke-width="2"/>
<path d="M249 39h6M252 36v6" stroke="#2a62c0" stroke-width="1.5"/><path d="M256 44l5 5" stroke="#d8a820" stroke-width="3"/>
<circle cx="280" cy="39" r="6" fill="#bcd8f4" stroke="#3c7cc8" stroke-width="2"/>
<path d="M277 39h6" stroke="#2a62c0" stroke-width="1.5"/><path d="M284 44l5 5" stroke="#d8a820" stroke-width="3"/>
<path d="M300.5 30v21M364.5 30v21M542.5 30v21M1037.5 30v21" stroke="#aca899"/>
<rect x="334.5" y="29.5" width="25" height="22" fill="#f4f3ec" stroke="#fff"/>
<!-- chart shift & autoscroll -->
<path d="M316 34v15h-4M312 48h14M316 34l-2 3M316 34l2 3" stroke="#555" fill="none"/><path d="M320 38l5 3-5 3z" fill="#2cb82c"/>
<path d="M343 34v15M339 48h15M351 34v14" stroke="#555" fill="none"/><path d="M347 41h7" stroke="#d83010" stroke-width="2"/>
<!-- new order -->
<path d="M376 34h8l4 4v9h-12z" fill="#fff" stroke="#777"/>
<path d="M385 43h4v-4h3v4h4v3h-4v5h-3v-5h-4z" fill="#1dc81d" stroke="#0a7a0a" stroke-width=".6"/>
<path d="M393 39h6l-3 3z" fill="#000"/>
<!-- clock -->
<circle cx="417" cy="41" r="7.5" fill="#f4f8ff" stroke="#1e6ec8" stroke-width="2.4"/>
<path d="M417 36v5h4" stroke="#333" fill="none"/><path d="M427 39h6l-3 3z" fill="#000"/>
<!-- indicators -->
<rect x="444.5" y="34.5" width="15" height="13" fill="#f8f8f8" stroke="#2a62c0"/>
<rect x="445" y="35" width="14" height="3" fill="#3c80d8"/>
<path d="M446 42l3-2 3 2 3-2 3 1" stroke="#d83010" fill="none"/><path d="M446 45l3-1 3 1 3-1 3 1" stroke="#2cb82c" fill="none"/>
<path d="M463 39h6l-3 3z" fill="#000"/>
<path d="M478.5 30v21" stroke="#aaa59a" stroke-width="2" stroke-dasharray="1 1"/>
<rect x="484.5" y="29.5" width="25" height="22" fill="#f4f3ec" stroke="#fff"/>
<path d="M492 33v14l3-3 3 6 2-1-3-6h4z" fill="#333"/>
<path d="M525 34v6M525 44v5M517 41.5h6M528 41.5h6" stroke="#444"/>
<path d="M560.5 36v12M583 41.5h12M611 47l11-11" stroke="#444"/>
<path d="M637 46l9-10M642 48l9-10M637 40h13M637 44h13" stroke="#666" fill="none"/>
<text x="649" y="51" style="font-size:6px;font-weight:bold" fill="#444">E</text>
<path d="M666 35h13M666 38h13M666 41h13M666 44h11" stroke="#666" stroke-dasharray="1 1"/>
<text x="675" y="51" style="font-size:6px;font-weight:bold">F</text>
<text x="695" y="47" style="font-size:13px;font-weight:bold;fill:#666">A</text>
<rect x="723.5" y="35.5" width="11" height="12" fill="none" stroke="#666" stroke-dasharray="1 1"/>
<text x="725" y="46" style="font-size:11px;font-weight:bold;fill:#555">T</text>
<path d="M751 36l4 4-3 2-3-3zM758 43l5 3-5 4-3-3z" fill="#444"/><path d="M766 39h6l-3 3z" fill="#000"/>
<path d="M783.5 30v21" stroke="#aaa59a" stroke-width="2" stroke-dasharray="1 1"/>
<rect x="927.5" y="29.5" width="25" height="22" fill="#f4f3ec" stroke="#aca899"/>
<g style="fill:#555"><text x="793" y="45" fill="#555" textLength="13" lengthAdjust="spacingAndGlyphs">M1</text><text x="821" y="45" fill="#555" textLength="13" lengthAdjust="spacingAndGlyphs">M5</text><text x="847" y="45" fill="#555" textLength="17" lengthAdjust="spacingAndGlyphs">M15</text><text x="875" y="45" fill="#555" textLength="17" lengthAdjust="spacingAndGlyphs">M30</text><text x="905" y="45" fill="#555" textLength="12" lengthAdjust="spacingAndGlyphs">H1</text><text x="932" y="45" fill="#555" textLength="13" lengthAdjust="spacingAndGlyphs">H4</text><text x="961" y="45" fill="#555" textLength="12" lengthAdjust="spacingAndGlyphs">D1</text><text x="988" y="45" fill="#555" textLength="15" lengthAdjust="spacingAndGlyphs">W1</text><text x="1015" y="45" fill="#555" textLength="15" lengthAdjust="spacingAndGlyphs">MN</text></g>
<rect x="1072" y="28" width="171" height="22" fill="#fff" stroke="#aca899"/>
<circle cx="1237" cy="37.500" r="4.500" fill="#eaf3ff" stroke="#2a78d8" stroke-width="1.6"/><path d="M1233 41l-4 4" stroke="#2a78d8" stroke-width="2.4"/>
<rect x="1244.5" y="28.5" width="31" height="22" fill="#ece9d8" stroke="#aca899"/>
<path d="M1250 33h16v12h-7l-2 4v-4h-7z" fill="#5a80b8"/>
<text x="1254" y="43" style="font-size:11px;font-weight:bold;fill:#fff">5</text>
</g>

<!-- FILE MENU -->
<rect x="18.5" y="25.5" width="217" height="380" fill="#fff" stroke="#8f8d84"/>
<rect x="19" y="26" width="26" height="379" fill="#e9e6d7"/>
<rect x="21.5" y="96.5" width="210" height="22" fill="#c9d2e0" stroke="#316ac5"/>
<path d="M53 192.5H232M53 223.5H232M53 300.5H232M53 377.5H232" stroke="#e4e1cf"/>
<text x="53" y="43">New Chart</text>
<text x="53" y="66">Open Offline</text>
<text x="53" y="89">Open Deleted</text>
<text x="53" y="112">Profiles</text>
<text x="53" y="135">Close</text>
<text x="53" y="158">Save As</text>
<text x="53" y="181">Save As Picture...</text>
<text x="53" y="212">Open Data Folder</text>
<text x="53" y="243">Open an Account</text>
<text x="53" y="266">Login to Trade Account</text>
<text x="53" y="289">Login to MQL5.community</text>
<text x="53" y="320">Print Setup...</text>
<text x="53" y="343">Print Preview</text>
<text x="53" y="366">Print...</text>
<text x="53" y="397">Exit</text>
<g text-anchor="end"><text x="222" y="135">Ctrl+F4</text><text x="221" y="158">Ctrl+S</text><text x="221" y="366">Ctrl+P</text></g>
<path d="M222 80l5 4-5 4zM222 103l5 4-5 4z" fill="#000"/>
<!-- menu icons -->
<rect x="26" y="33" width="13" height="11" rx="1" fill="#dfeaf6" stroke="#5b8fbe"/><path d="M30 36v6M28 38h4M33 40h4" stroke="#444" fill="none"/>
<path d="M33 42h3v-3h3v3h3v3h-3v3h-3v-3h-3z" fill="#2ec42e" stroke="#0e7a0e" stroke-width=".6"/>
<path d="M25 58h7l2 2h5v9H27z" fill="#d8ac3c" stroke="#8c6c1e"/><path d="M26 69l3-7h13l-3 7z" fill="#fbe88e" stroke="#a8862a"/><path d="M34 57c2-2 5-2 7 0" stroke="#3ca43c" fill="none"/>
<rect x="25" y="146" width="15" height="15" rx="1" fill="#3c7cc0" stroke="#245a94"/><rect x="28" y="147" width="9" height="6" fill="#e8f0f8"/><rect x="28" y="155" width="9" height="6" fill="#a8c8e8"/>
<rect x="25" y="170" width="10" height="13" fill="#dfeaf6" stroke="#5b8fbe"/><path d="M29 173v7M27 175h4" stroke="#444" fill="none"/><rect x="32" y="176" width="9" height="9" fill="#4a86c4" stroke="#245a94"/><rect x="34" y="177" width="5" height="3" fill="#fff"/>
<path d="M26 202h7l2 2h5v8H27z" fill="#d8ac3c" stroke="#8c6c1e"/><path d="M26 213l3-6h13l-3 6z" fill="#fbe88e" stroke="#a8862a"/>
<g><circle cx="31" cy="234" r="3.6" fill="#f4c45a" stroke="#b88a20"/><path d="M25 245c0-5 3-7 6-7s6 2 6 7z" fill="#3cb83c" stroke="#1a7a1a"/></g>
<path d="M35 241h3v-3h2v3h3v2h-3v3h-2v-3h-3z" fill="#2ec42e" stroke="#0e7a0e" stroke-width=".6"/>
<circle cx="31" cy="257" r="3.6" fill="#f4c45a" stroke="#b88a20"/><path d="M25 268c0-5 3-7 6-7s6 2 6 7z" fill="#3cb83c" stroke="#1a7a1a"/>
<path d="M34 263h4v-3l5 4.500-5 4.500v-3h-4z" fill="#2ec42e" stroke="#0e7a0e" stroke-width=".6"/>
<path d="M25 278h12v10h-6l-2 3v-3h-4z" fill="#4a70b0"/><text x="28" y="287" style="font-size:9px;font-weight:bold;fill:#fff">S</text>
<path d="M34 286h4v-3l5 4.500-5 4.500v-3h-4z" fill="#2ec42e" stroke="#0e7a0e" stroke-width=".6"/>
<rect x="24.500" y="332.500" width="13" height="13" fill="#f8e48a" stroke="#a08a30"/><path d="M29 335v6h5" stroke="#3c78c0" fill="none"/><rect x="34" y="340" width="7" height="6" fill="#dcdcd8" stroke="#888"/>
<rect x="29" y="355" width="9" height="7" fill="#f8e48a" stroke="#a08a30"/><rect x="25" y="361" width="16" height="6" rx="1" fill="#d8d8d4" stroke="#888"/><rect x="28" y="366" width="10" height="3" fill="#fff" stroke="#888"/>

<!-- SUBMENU -->
<rect x="231.500" y="93.500" width="180" height="219" fill="#fff" stroke="#8f8d84"/>
<rect x="232" y="94" width="25" height="218" fill="#e9e6d7"/>
<path d="M265 191.500H408" stroke="#e4e1cf"/>
<text x="265" y="111">Next</text>
<text x="265" y="134">Previous</text>
<text x="265" y="157">Save As...</text>
<text x="265" y="180">Remove</text>
<text x="265" y="211">Default</text>
<text x="265" y="234">British Pound</text>
<text x="265" y="257">Euro</text>
<text x="265" y="280">Market Overview</text>
<text x="265" y="303">Swiss Franc</text>
<g text-anchor="end"><text x="397" y="111">Ctrl+F5</text><text x="397" y="134">Shift+F5</text></g>
<path d="M399 172l4 4-4 4z" fill="#000"/>
<rect x="236.500" y="144.500" width="12" height="12" fill="#dfeaf6" stroke="#5b8fbe"/><path d="M240 147v6M238 149h4" stroke="#444" fill="none"/><rect x="245" y="152" width="9" height="9" fill="#4a86c4" stroke="#245a94"/><rect x="247" y="153" width="5" height="3" fill="#fff"/>
<path d="M242 207l3 3 5-6" stroke="#000" stroke-width="2" fill="none"/>

<!-- RED ANNOTATIONS -->
<g fill="none" stroke="#f00" stroke-width="3">
<rect x="3.500" y="1.500" width="60" height="22"/>
<rect x="35.500" y="98.500" width="63" height="8"/>
<rect x="226.500" y="188.500" width="95" height="40"/>
</g>
</svg>
</body></html>
